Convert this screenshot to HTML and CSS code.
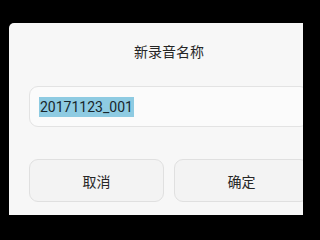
FILE: index.html
```html
<!DOCTYPE html>
<html lang="zh">
<head>
<meta charset="utf-8">
<link rel="stylesheet" href="styles.css">
</head>
<body>
<div class="screen">
  <div class="dialog">
    <div class="title">新录音名称</div>
    <div class="input"><span class="sel">20171123_001</span></div>
    <div class="buttons">
      <div class="btn">取消</div>
      <div class="btn">确定</div>
    </div>
  </div>
</div>
</body>
</html>
```

FILE: styles.css
```css
html, body {
  margin: 0;
  padding: 0;
  background: #000;
}
.screen {
  width: 303px;
  height: 215px;
  overflow: hidden;
  padding-top: 23px;
  padding-left: 9px;
  box-sizing: border-box;
}
.dialog {
  width: 320px;
  height: 192px;
  box-sizing: border-box;
  background: #f7f7f7;
  border-radius: 5px 5px 0 0;
  padding: 19px 20px 0 20px;
  font-family: Roboto, "Noto Sans CJK SC", sans-serif;
}
.title {
  text-align: center;
  font-size: 14px;
  line-height: 20px;
  height: 20px;
  color: #262626;
}
.input {
  margin-top: 24px;
  height: 41px;
  box-sizing: border-box;
  border: 1px solid #e3e3e3;
  border-radius: 9px;
  background: #fbfbfb;
  padding: 0 0 0 9px;
  display: flex;
  align-items: center;
}
.sel {
  background: #8ecbe2;
  color: #18262c;
  font-size: 14px;
  line-height: 20px;
  padding: 0 1px;
}
.buttons {
  margin-top: 32px;
  display: flex;
  gap: 10px;
}
.btn {
  flex: 1;
  height: 43px;
  box-sizing: border-box;
  border: 1px solid #e0e0e0;
  border-radius: 9px;
  background: #f3f3f3;
  display: flex;
  align-items: center;
  justify-content: center;
  font-size: 14px;
  color: #262626;
}
```
